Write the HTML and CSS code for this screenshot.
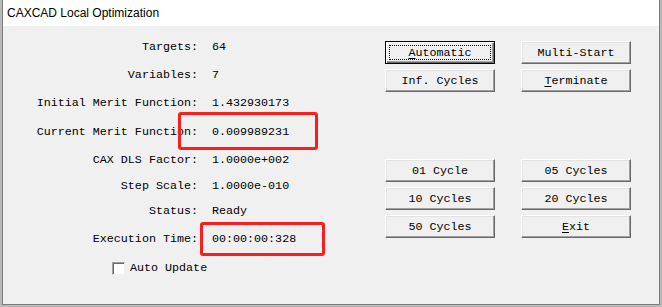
FILE: index.html
```html
<!DOCTYPE html>
<html>
<head>
<meta charset="utf-8">
<link rel="stylesheet" href="styles.css">
</head>
<body>
<div class="window">
  <div class="titlebar">CAXCAD Local Optimization</div>
  <div class="client">
    <div class="form">
      <div class="fields">
        <span class="lbl r1">Targets:</span><span class="val">64</span>
        <span class="lbl">Variables:</span><span class="val">7</span>
        <span class="lbl">Initial Merit Function:</span><span class="val">1.432930173</span>
        <span class="lbl">Current Merit Function:</span><span class="val">0.009989231</span>
        <span class="lbl">CAX DLS Factor:</span><span class="val">1.0000e+002</span>
        <span class="lbl">Step Scale:</span><span class="val">1.0000e-010</span>
        <span class="lbl">Status:</span><span class="val">Ready</span>
        <span class="lbl">Execution Time:</span><span class="val">00:00:00:328</span>
      </div>
      <label class="check"><span class="box"></span>Auto Update</label>
    </div>
    <div class="buttons">
      <div class="btn-grid">
        <button class="btn default"><u>A</u>utomatic</button>
        <button class="btn">Multi-Start</button>
        <button class="btn">Inf. Cycles</button>
        <button class="btn"><u>T</u>erminate</button>
      </div>
      <div class="btn-grid">
        <button class="btn">01 Cycle</button>
        <button class="btn">05 Cycles</button>
        <button class="btn">10 Cycles</button>
        <button class="btn">20 Cycles</button>
        <button class="btn">50 Cycles</button>
        <button class="btn"><u>E</u>xit</button>
      </div>
    </div>
    <div class="mark mark-merit"></div>
    <div class="mark mark-time"></div>
  </div>
</div>
</body>
</html>
```
FILE: styles.css
```css
html, body {
  margin: 0;
  padding: 0;
}
body {
  width: 662px;
  height: 307px;
  background: #b9b9b9;
  overflow: hidden;
}
.window {
  margin-left: 2px;
  width: 656px;
  height: 304px;
  border: 1px solid #7c7c7c;
  border-top: none;
  background: #f0f0f0;
  display: flex;
  flex-direction: column;
}
.titlebar {
  height: 26px;
  line-height: 26px;
  background: #fff;
  padding-left: 4px;
  font-family: "Liberation Sans", Arial, sans-serif;
  font-size: 12px;
  color: #000;
  flex: none;
}
.client {
  position: relative;
  flex: 1;
  display: flex;
  font-family: "Liberation Mono", "Courier New", monospace;
  font-size: 11.7px;
  color: #000;
}
.form {
  padding-top: 7px;
  display: flex;
  flex-direction: column;
}
.fields {
  display: grid;
  grid-template-columns: 195px auto;
  grid-template-rows: 28px 28px 28px 29px 28px 24px 26px 29px;
  column-gap: 14px;
  align-items: center;
}
.lbl {
  text-align: right;
  white-space: pre;
}
.val {
  white-space: pre;
}
.check {
  height: 30px;
  display: flex;
  align-items: center;
  padding-left: 109px;
  gap: 5px;
}
.box {
  width: 11px;
  height: 11px;
  background: #fff;
  border: 1px solid;
  border-color: #a0a0a0 #f0f0f0 #f0f0f0 #a0a0a0;
  box-shadow: inset 1px 1px #696969;
}
.buttons {
  margin-left: auto;
  padding-right: 28px;
  padding-top: 15px;
  display: flex;
  flex-direction: column;
  gap: 67px;
}
.btn-grid {
  display: grid;
  grid-template-columns: 110px 110px;
  grid-auto-rows: 23px;
  column-gap: 26px;
  row-gap: 5px;
}
.btn {
  margin: 0;
  padding: 0;
  font: inherit;
  color: #000;
  background: #f0f0f0;
  border: 1px solid;
  border-color: #fff #696969 #696969 #fff;
  box-shadow: inset -1px -1px #a0a0a0, inset 1px 1px #e3e3e3;
  text-align: center;
}
.btn.default {
  border-color: #000;
  box-shadow: inset 1px 1px #fff, inset -1px -1px #696969, inset -2px -2px #a0a0a0;
  outline: 1px dotted #000;
  outline-offset: -5px;
}
.btn u {
  text-decoration: underline;
  text-underline-offset: 2px;
}
.mark {
  position: absolute;
  border: 3px solid #fb1e1e;
  border-radius: 3px;
  box-sizing: border-box;
}
.mark-merit {
  left: 175px;
  top: 86px;
  width: 140px;
  height: 38px;
}
.mark-time {
  left: 197px;
  top: 196px;
  width: 125px;
  height: 34px;
}
```
